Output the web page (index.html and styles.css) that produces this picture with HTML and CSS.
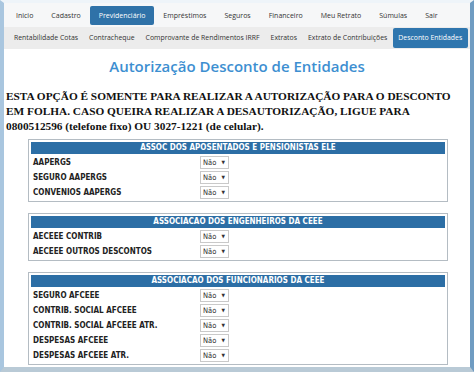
FILE: index.html
```html
<!DOCTYPE html>
<html lang="pt-BR">
<head>
    <meta charset="UTF-8">
    <meta name="viewport" content="width=device-width, initial-scale=1.0">
    <title>Autorização Desconto de Entidades</title>
    <link rel="stylesheet" href="styles.css">
</head>
<body>
<div class="frame">
    <!-- menu principal -->
    <ul class="menu">
        <li><a href="#">Inicio</a></li>
        <li><a href="#">Cadastro</a></li>
        <li><a href="#" class="ativo">Previdenciário</a></li>
        <li><a href="#">Empréstimos</a></li>
        <li><a href="#">Seguros</a></li>
        <li><a href="#">Financeiro</a></li>
        <li><a href="#">Meu Retrato</a></li>
        <li><a href="#">Súmulas</a></li>
        <li><a href="#">Sair</a></li>
    </ul>
    <!-- submenu -->
    <ul class="submenu">
        <li><a href="#">Rentabilidade Cotas</a></li>
        <li><a href="#">Contracheque</a></li>
        <li><a href="#">Comprovante de Rendimentos IRRF</a></li>
        <li><a href="#">Extratos</a></li>
        <li><a href="#">Extrato de Contribuições</a></li>
        <li><a href="#" class="ativo">Desconto Entidades</a></li>
    </ul>

    <h1 class="titulo">Autorização Desconto de Entidades</h1>
    <p class="aviso">ESTA OPÇÃO É SOMENTE PARA REALIZAR A AUTORIZAÇÃO PARA O DESCONTO EM FOLHA. CASO QUEIRA REALIZAR A DESAUTORIZAÇÃO, LIGUE PARA 0800512596 (telefone fixo) OU 3027-1221 (de celular).</p>

    <table class="entidade">
        <tr><td class="td_head" colspan="2">ASSOC DOS APOSENTADOS E PENSIONISTAS ELE</td></tr>
        <tr><td class="td_nome">AAPERGS</td><td><span class="sel">Não</span></td></tr>
        <tr><td class="td_nome">SEGURO AAPERGS</td><td><span class="sel">Não</span></td></tr>
        <tr><td class="td_nome">CONVENIOS AAPERGS</td><td><span class="sel">Não</span></td></tr>
    </table>

    <table class="entidade">
        <tr><td class="td_head" colspan="2">ASSOCIACAO DOS ENGENHEIROS DA CEEE</td></tr>
        <tr><td class="td_nome">AECEEE CONTRIB</td><td><span class="sel">Não</span></td></tr>
        <tr><td class="td_nome">AECEEE OUTROS DESCONTOS</td><td><span class="sel">Não</span></td></tr>
    </table>

    <table class="entidade">
        <tr><td class="td_head" colspan="2">ASSOCIACAO DOS FUNCIONARIOS DA CEEE</td></tr>
        <tr><td class="td_nome">SEGURO AFCEEE</td><td><span class="sel">Não</span></td></tr>
        <tr><td class="td_nome">CONTRIB. SOCIAL AFCEEE</td><td><span class="sel">Não</span></td></tr>
        <tr><td class="td_nome">CONTRIB. SOCIAL AFCEEE ATR.</td><td><span class="sel">Não</span></td></tr>
        <tr><td class="td_nome">DESPESAS AFCEEE</td><td><span class="sel">Não</span></td></tr>
        <tr><td class="td_nome">DESPESAS AFCEEE ATR.</td><td><span class="sel">Não</span></td></tr>
    </table>
</div>
</body>
</html>
```

FILE: styles.css
```css
body {
    margin: 0;
    background-color: #fff;
}
.frame {
    width: 474px;
    height: 372px;
    border-left: 4px solid #a9c6df;
    border-right: 4px solid #6f9cc2;
    border-bottom: 5px solid #b9cad6;
    border-top: 3px solid #eef4f9;
    box-sizing: border-box;
    overflow: hidden;
}
/* menu principal */
.menu {
    list-style: none;
    margin: 0;
    padding: 3px 0 2px 3px;
    display: flex;
    white-space: nowrap;
    background-color: #f6f7f8;
    font-family: "Open Sans", sans-serif;
    font-size: 7px;
}
.menu a {
    display: block;
    padding: 0 9px;
    line-height: 19px;
    color: #333;
    text-decoration: none;
    border-radius: 2px;
}
.menu a.ativo {
    background-color: #2f72a8;
    color: #fff;
}
/* submenu */
.submenu {
    list-style: none;
    margin: 0;
    padding: 1px 0 1px 4.5px;
    display: flex;
    white-space: nowrap;
    background-color: #ececec;
    font-family: "Open Sans", sans-serif;
    font-size: 6.9px;
}
.submenu a {
    display: block;
    padding: 0 5.5px;
    line-height: 20px;
    color: #333;
    text-decoration: none;
    border-radius: 2px;
}
.submenu a.ativo {
    background-color: #2f76ae;
    color: #fff;
}
.titulo {
    margin: 7px 0 0;
    text-align: center;
    font-family: "Open Sans", sans-serif;
    font-weight: 600;
    font-size: 15px;
    line-height: 20px;
    color: #3d8fd1;
}
.aviso {
    width: 448px;
    margin: 13px 0 0 2px;
    font-family: "Liberation Serif", serif;
    font-weight: bold;
    font-size: 11.3px;
    line-height: 15px;
    color: #111;
}
/* tabelas das entidades */
.entidade {
    margin: 11px 0 0 24px;
    width: 420px;
    border: 1px solid #b4bcc3;
    border-spacing: 2px;
    font-family: "DejaVu Sans Condensed", "DejaVu Sans", sans-serif;
    font-size: 8px;
    font-weight: bold;
    color: #222;
}
.aviso + .entidade {
    margin-top: 5px;
}
.entidade td {
    padding: 0 2px;
    height: 13px;
    line-height: 13px;
}
.entidade .td_head {
    height: 12px;
    line-height: 12px;
    background-color: #2c6ea5;
    color: #fff;
    text-align: center;
}
.td_nome {
    width: 161px;
}
.sel {
    display: inline-block;
    position: relative;
    vertical-align: top;
    width: 18px;
    height: 11px;
    padding: 0 7px 0 2px;
    line-height: 11px;
    border: 1px solid #c9c9c9;
    background-color: #fff;
    font-weight: normal;
    font-size: 7.5px;
    color: #333;
}
/* seta do select */
.sel::after {
    content: "▼";
    position: absolute;
    right: 3px;
    top: 0;
    font-size: 5px;
}
```
